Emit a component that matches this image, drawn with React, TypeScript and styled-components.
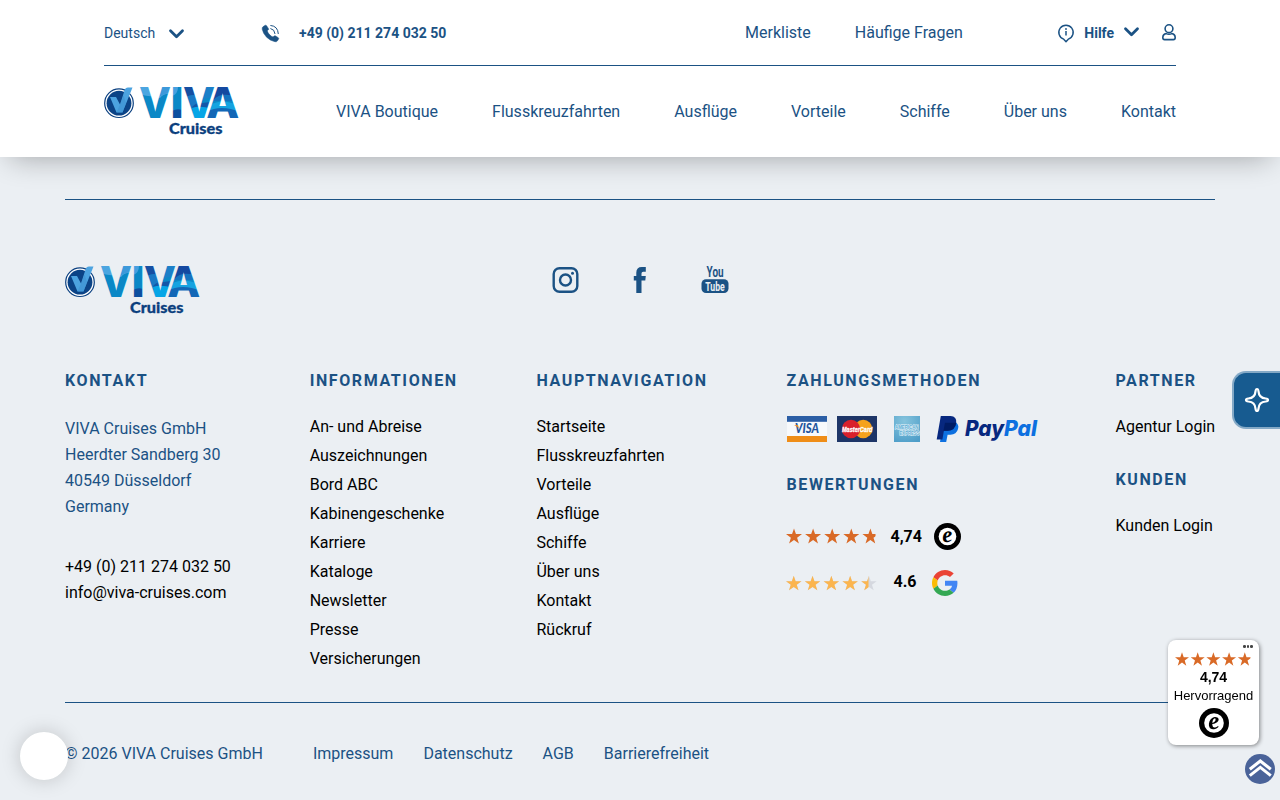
import React, { useId } from 'react';
import styled, { createGlobalStyle } from 'styled-components';

const BLUE = '#1b5284';

const GlobalStyle = createGlobalStyle`
  * { box-sizing: border-box; }
  html, body { margin: 0; height: 800px; overflow: hidden; }
  body {
    background: #ebeff3;
    color: #000;
    font: 400 16px/26px Roboto, "Liberation Sans", sans-serif;
  }
  svg { display: block; flex: none; overflow: visible; }
  a { color: inherit; text-decoration: none; white-space: nowrap; }
`;

const Header = styled.header`
  position: relative;
  height: 157px;
  padding: 0 104px;
  background: #fff;
  color: ${BLUE};
  box-shadow: 0 10px 28px -10px rgba(0, 0, 0, 0.33);
`;
const TopBar = styled.div`
  display: flex;
  align-items: center;
  height: 66px;
  border-bottom: 1px solid ${BLUE};
`;
const Language = styled.div`
  display: flex;
  align-items: center;
  gap: 13.5px;
  width: 157px;
  font-size: 14px;
  padding-top: 1px;
  svg { margin-top: 2px; }
`;
const Phone = styled.a`
  display: flex;
  align-items: center;
  gap: 18px;
  font-size: 14px;
  font-weight: 700;
  padding-top: 1px;
`;
const TopLinks = styled.nav`
  display: flex;
  gap: 44px;
  margin-left: auto;
`;
const Help = styled.div`
  display: flex;
  align-items: center;
  gap: 10px;
  margin: 0 23.5px 0 95.5px;
  font-size: 14px;
  font-weight: 700;
  padding-top: 1px;
  svg:last-child { margin: -2px 0 0 -.5px; }
`;
const MainBar = styled.div`
  display: flex;
  justify-content: space-between;
  align-items: center;
  height: 91px;
`;
const MainNav = styled.nav`
  display: flex;
  gap: 54px;
`;

const Footer = styled.footer`
  padding: 42px 65px 0;
`;
const Rule = styled.hr`
  height: 1px;
  margin: 0;
  border: 0;
  background: ${BLUE};
`;
const BrandRow = styled.div`
  display: grid;
  grid-template-columns: 1fr auto 1fr;
  padding: 66px 0 0;
  height: 170px;
`;
const Social = styled.div`
  display: flex;
  justify-content: space-between;
  width: 177px;
  height: 28px;
  color: ${BLUE};
`;
const Columns = styled.div`
  display: grid;
  grid-template-columns: 244.7px 226.8px 250px 329px auto;
  height: 332px;
`;
const Heading = styled.h4<{ $gap?: number }>`
  margin: 0 0 ${p => p.$gap ?? 20}px;
  color: ${BLUE};
  font-size: 16px;
  font-weight: 700;
  line-height: 22px;
  letter-spacing: 1.6px;
  white-space: nowrap;
`;
const List = styled.ul`
  margin: 0;
  padding: 0;
  list-style: none;
  line-height: 29px;
`;
const Address = styled.p`
  margin: 0 0 34px;
  color: ${BLUE};
`;
const Block = styled.div<{ $height?: number }>`
  height: ${p => (p.$height ? p.$height + 'px' : 'auto')};
`;
const Payments = styled.div`
  display: flex;
  align-items: center;
  height: 28px;
`;
const RatingRow = styled.div<{ $top: number; $gap: number; $logoGap: number; $drop?: number }>`
  display: flex;
  align-items: center;
  height: 28px;
  margin-top: ${p => p.$top}px;
  font-weight: 700;
  span { margin: ${p => p.$drop ?? 0}px ${p => p.$logoGap}px 0 ${p => p.$gap}px; }
`;
const Legal = styled.div`
  display: flex;
  gap: 30px;
  padding-top: 38px;
  color: ${BLUE};
  span { margin-right: 20px; }
`;

const Bubble = styled.div`
  position: fixed;
  left: 20px;
  top: 732px;
  width: 48px;
  height: 48px;
  border-radius: 50%;
  background: #fff;
  box-shadow: 0 0 20px rgba(0, 0, 0, 0.18);
`;
const Assistant = styled.button`
  position: fixed;
  right: 0;
  top: 371px;
  display: grid;
  place-items: center;
  width: 48px;
  height: 58px;
  padding: 0;
  border: 2px solid #84a9c6;
  border-right: 0;
  border-radius: 14px 0 0 14px;
  background: #175b90;
`;
const TrustBadge = styled.aside`
  position: fixed;
  left: 1168px;
  top: 640px;
  display: flex;
  flex-direction: column;
  align-items: center;
  width: 91px;
  height: 105px;
  border-radius: 8px;
  background: #fff;
  box-shadow: 1px 1px 4px rgba(0, 0, 0, 0.45);
  font: 13px/18px "Liberation Sans", Arial, sans-serif;
  padding-top: 11.5px;
  strong { font-size: 14px; line-height: 16px; margin-top: 3.5px; }
  span { line-height: 15px; margin: 3px 0 5px; }
`;
const Dots = styled.i`
  position: absolute;
  right: 6px;
  top: 5px;
  display: flex;
  gap: 1px;
  &::before, &::after, b { content: ''; width: 2.7px; height: 2.7px; border-radius: 50%; background: #444; }
`;
const ToTop = styled.button`
  position: fixed;
  left: 1245px;
  top: 754px;
  width: 30px;
  height: 30px;
  padding: 0;
  border: 0;
  border-radius: 50%;
  background: #4a6399;
`;

function Logo() {
  const id = useId().replace(/[^a-zA-Z0-9]/g, '');
  const stretch = 'spacingAndGlyphs';
  return (
    <svg width="135" height="49" viewBox="0 0 135 49" role="img" aria-label="VIVA Cruises">
      <defs>
        <pattern id={id} width="140" height="60" patternUnits="userSpaceOnUse">
          <rect width="140" height="60" fill="#0b88c6" />
          <path d="M34 0H67V7Q60 6 56 11L50 9Q43 10 34 6Z" fill="#4ba5e0" />
          <path d="M55 10Q61 5 67 7V0H58Z" fill="#3c99da" />
          <path d="M68 0H74Q74 7 68 9Z" fill="#46a0df" />
          <path d="M68 24Q73 21 78 23V32H68Z" fill="#0d4f9f" />
          <path d="M79 0H90Q94 5 93 9Q88 7 82 10Z" fill="#164fa2" />
          <path d="M82 10Q92 5 99 14L92 20H84Z" fill="#1a78c4" />
          <path d="M88 20Q94 14 98 16L106 15L103 23H89Z" fill="#1458a8" />
          <path d="M88 21Q96 18 108 22L104 32H90Z" fill="#06a5e6" />
          <path d="M101 0H112L108 11Q103 9 98 14Z" fill="#1c7fc8" />
          <path d="M112 0H128L130 9Q119 6 108 14Z" fill="#1449a0" />
          <path d="M109 13Q117 5 128 9L130 14H109Z" fill="#1573bf" />
          <path d="M106 18Q118 11 133 18V24H104Z" fill="#15a3e0" />
          <path d="M102 25Q117 17 136 25V32H100Z" fill="#1267b6" />
        </pattern>
      </defs>
      <circle cx="15" cy="16.2" r="14.3" fill="#fff" stroke="#0b4080" strokeWidth="1.2" />
      <circle cx="15" cy="16.2" r="12.4" fill="#0b4386" />
      <path d="M6 10H12L16 17.5L20.5 3.5Q21.3 .6 24 .6H28.5L18.5 25.5H12.5Z" fill="#4ca3e0" />
      <path d="M16 17.5L19.5 8.5L22 16L18.5 25.5H12.5Z" fill="#398dcd" opacity=".5" />
      <g fontFamily="Inter" fontWeight="800" fontSize="41.8" fill={`url(#${id})`}>
        <text x="34.9" y="30.9" textLength="32" lengthAdjust={stretch}>V</text>
        <text x="66.2" y="30.9" textLength="13.6" lengthAdjust={stretch}>I</text>
        <text x="79" y="30.9" textLength="32" lengthAdjust={stretch}>V</text>
        <text x="102.2" y="30.9" textLength="33" lengthAdjust={stretch}>A</text>
      </g>
      <text x="65" y="47.4" textLength="53.5" lengthAdjust={stretch} fontFamily="Lato" fontWeight="900" fontSize="15" fill="#0b3f7e" stroke="#0b3f7e" strokeWidth=".3">Cruises</text>
    </svg>
  );
}

const Chevron = () => (
  <svg width="15" height="10" viewBox="0 0 15 10" fill="none" stroke={BLUE} strokeWidth="2.8">
    <path d="M1.5 1.8L7.5 7.8L13.5 1.8" strokeLinecap="round" strokeLinejoin="round" />
  </svg>
);

const PhoneIcon = () => (
  <svg width="20" height="19" viewBox="0 0 20 19" fill="none">
    <path d="M2.2 2.6L4.2 1.3Q5 .9 5.6 1.7L7.5 4.7Q7.9 5.4 7.2 6L6.2 6.8Q6.9 9.2 9 11.1Q10.5 12.6 12 12.9L13.2 12Q13.8 11.4 14.6 11.9L17.3 13.7Q18 14.3 17.6 15L16.3 17Q15.6 18 14 17.7Q9.5 17 5.6 13.2Q2 9.5 1.2 5.2Q.9 3.5 2.2 2.6Z" fill={BLUE} stroke={BLUE} strokeWidth=".5" />
    <path d="M9.8 4.6Q13.6 5.3 14 9.6M9.8 1.5Q16.8 2 17.3 9.6" stroke={BLUE} strokeWidth="1" strokeLinecap="round" />
  </svg>
);

const InfoIcon = () => (
  <svg width="16" height="19" viewBox="0 0 16 19" fill="none" stroke={BLUE} strokeWidth="1.4">
    <path d="M5.7 15.2A7.2 7.2 0 1 1 10.3 15.2L8 17.8Z" strokeLinejoin="round" />
    <path d="M8 7V11.6" strokeWidth="1.5" />
    <circle cx="8" cy="5" r=".9" fill={BLUE} stroke="none" />
  </svg>
);

const UserIcon = () => (
  <svg width="14" height="17" viewBox="0 0 14 17" fill="none" stroke={BLUE} strokeWidth="1.6">
    <circle cx="7" cy="4.7" r="3.9" />
    <path d="M4.2 9.6Q.9 10 .8 13.5Q.8 15.6 2.6 15.6H11.4Q13.2 15.6 13.2 13.5Q13.1 10 9.8 9.6Q7 11 4.2 9.6Z" strokeLinejoin="round" />
  </svg>
);

const Instagram = () => (
  <svg width="27" height="28" viewBox="0 0 27 28" fill="none" stroke="currentColor">
    <rect x="1.7" y="2.2" width="23.6" height="23.6" rx="5.8" strokeWidth="2.4" />
    <circle cx="13.5" cy="14" r="5.5" strokeWidth="2.4" />
    <circle cx="20.5" cy="7.2" r="1.5" fill="currentColor" stroke="none" />
  </svg>
);

const Facebook = () => (
  <svg width="14" height="28" viewBox="0 0 14 28" fill="currentColor">
    <path d="M3.3 27V14.6H.8V10H3.3V6.6Q3.3 1 8.8 1H12.8V5.7H10.2Q8.5 5.7 8.5 7.4V10H12.8L12.3 14.6H8.5V27Z" />
  </svg>
);

const Youtube = () => (
  <svg width="28" height="28" viewBox="0 0 28 28" fontFamily="Roboto" fontWeight="700">
    <text x="5.6" y="11.4" fontSize="14.5" textLength="17" lengthAdjust="spacingAndGlyphs" fill="currentColor">You</text>
    <rect x=".5" y="13.2" width="27" height="13.8" rx="4.5" fill="currentColor" />
    <text x="4.3" y="24.8" fontSize="13" textLength="19.5" lengthAdjust="spacingAndGlyphs" fill="#ebeff3">Tube</text>
  </svg>
);

const Google = () => (
  <svg width="26" height="26" viewBox="0 0 48 48">
    <path fill="#ea4335" d="M24 9.5c3.54 0 6.71 1.22 9.21 3.6l6.85-6.85C35.9 2.38 30.47 0 24 0 14.62 0 6.51 5.38 2.56 13.22l7.98 6.19C12.43 13.72 17.74 9.5 24 9.5z" />
    <path fill="#4285f4" d="M46.98 24.55c0-1.57-.15-3.09-.38-4.55H24v9.02h12.94c-.58 2.96-2.26 5.48-4.78 7.18l7.73 6c4.51-4.18 7.09-10.36 7.09-17.65z" />
    <path fill="#fbbc05" d="M10.53 28.59c-.48-1.45-.76-2.99-.76-4.59s.27-3.14.76-4.59l-7.98-6.19C.92 16.46 0 20.12 0 24c0 3.88.92 7.54 2.56 10.78l7.97-6.19z" />
    <path fill="#34a853" d="M24 48c6.48 0 11.93-2.13 15.89-5.81l-7.73-6c-2.15 1.45-4.92 2.3-8.16 2.3-6.26 0-11.57-4.22-13.47-9.91l-7.98 6.19C6.51 42.62 14.62 48 24 48z" />
  </svg>
);

const STAR = 'M8 0L9.95 5.7H16L11.1 9.35L12.9 15.2L8 11.65L3.1 15.2L4.9 9.35L0 5.7H6.05Z';

type StarsProps = { width: number; height: number; size: number; step: number; color: string; fill: number; rest?: string };
function Stars({ width, height, size, step, color, fill, rest = 'none' }: StarsProps) {
  const id = useId().replace(/[^a-zA-Z0-9]/g, '');
  const s = size / 16;
  return (
    <svg width={width} height={height} viewBox={`0 0 ${width} ${height}`}>
      <clipPath id={id}><rect width={fill} height={height} /></clipPath>
      {[rest, color].map((c, layer) => (
        <g key={layer} fill={c} clipPath={layer ? `url(#${id})` : undefined}>
          {[0, 1, 2, 3, 4].map(i => (
            <path key={i} d={STAR} transform={`translate(${i * step} ${(height - 15.2 * s) / 2}) scale(${s})`} />
          ))}
        </g>
      ))}
    </svg>
  );
}

const TrustedMark = ({ size }: { size: number }) => (
  <svg width={size} height={size} viewBox="0 0 30 30">
    <circle cx="15" cy="15" r="15" fill="#000" />
    <circle cx="15" cy="15" r="9.8" fill="#fff" />
    <text x="9" y="21" textLength="11.5" lengthAdjust="spacingAndGlyphs" fontFamily="Liberation Serif" fontStyle="italic" fontWeight="700" fontSize="25" transform="rotate(-6 15 15)">e</text>
  </svg>
);

const Visa = () => (
  <svg width="41" height="26" viewBox="0 0 41 26">
    <rect x="1" width="40" height="26" fill="#f7f9fb" />
    <rect x="1" width="40" height="5.8" fill="#2b5ea5" />
    <rect x="1" y="20" width="40" height="6" fill="#ef8d17" />
    <text x="9" y="17.3" fontFamily="Lato" fontStyle="italic" fontWeight="900" fontSize="12.5" textLength="24" lengthAdjust="spacingAndGlyphs" fill="#23559d">VISA</text>
    <path d="M8 9H11.2Q12.2 9 12.3 10L12.8 12.4Q11 9.8 8 9Z" fill="#ef8d17" />
  </svg>
);

const Mastercard = () => (
  <svg width="40" height="26" viewBox="0 0 40 26">
    <rect width="40" height="26" fill="#1d3567" />
    <circle cx="26.2" cy="13" r="9.2" fill="#f5a21d" />
    <circle cx="14" cy="13" r="9.2" fill="#d9202c" />
    <text x="5" y="16" fontFamily="Liberation Sans" fontStyle="italic" fontWeight="700" fontSize="7.5" textLength="30.5" lengthAdjust="spacingAndGlyphs" fill="#fff" stroke="#fff" strokeWidth=".3">MasterCard</text>
  </svg>
);

function Amex() {
  const id = useId().replace(/[^a-zA-Z0-9]/g, '');
  return (
    <svg width="26" height="26" viewBox="0 0 26 26" fontFamily="Liberation Sans" fontWeight="700" fontSize="5.8">
      <radialGradient id={id} cx=".4" cy=".2" r=".9">
        <stop offset="0" stopColor="#86c4dd" />
        <stop offset="1" stopColor="#4d9dc8" />
      </radialGradient>
      <rect width="26" height="26" fill={`url(#${id})`} />
      <g fill="#5aabd2" stroke="#e9f5fb" strokeWidth="1.1" paintOrder="stroke">
        <text x="1" y="12.9" textLength="23.5" lengthAdjust="spacingAndGlyphs">AMERICAN</text>
        <text x="5.5" y="18.8" textLength="20" lengthAdjust="spacingAndGlyphs">EXPRESS</text>
      </g>
    </svg>
  );
}

const Paypal = () => (
  <svg width="101" height="28" viewBox="0 0 101 28" fontFamily="Inter" fontStyle="italic" fontWeight="800" fontSize="21.5">
    <path d="M7.2 7H19Q23.5 9.3 22 14Q20.5 19.7 14.5 19.7H11.6L10.2 27H4Z" fill="#0d70e0" />
    <path d="M4.8 1H14.5Q21 1.4 20.2 8Q19 15.8 11.5 15.8H7.9L6.4 24.5H.7Z" fill="#07287f" />
    <path d="M9 7.7H20.2Q19 15.8 11.5 15.8H7.5Z" fill="#001c64" />
    <text x="29" y="21" textLength="39" lengthAdjust="spacingAndGlyphs" fill="#07287f">Pay</text>
    <text x="68" y="21" textLength="33" lengthAdjust="spacingAndGlyphs" fill="#0d70e0">Pal</text>
  </svg>
);

const Links = ({ items }: { items: string[] }) => (
  <List>{items.map(t => <li key={t}><a href="#">{t}</a></li>)}</List>
);

const Spacer = styled.div<{ $w: number }>`
  width: ${p => p.$w}px;
`;

export default function App() {
  return (
    <>
      <GlobalStyle />
      <Header>
        <TopBar>
          <Language>Deutsch <Chevron /></Language>
          <Phone href="#"><PhoneIcon />+49 (0) 211 274 032 50</Phone>
          <TopLinks><a href="#">Merkliste</a><a href="#">Häufige Fragen</a></TopLinks>
          <Help><InfoIcon />Hilfe <Chevron /></Help>
          <UserIcon />
        </TopBar>
        <MainBar>
          <Logo />
          <MainNav>
            {['VIVA Boutique', 'Flusskreuzfahrten', 'Ausflüge', 'Vorteile', 'Schiffe', 'Über uns', 'Kontakt'].map(t => <a href="#" key={t}>{t}</a>)}
          </MainNav>
        </MainBar>
      </Header>

      <Footer>
        <Rule />
        <BrandRow>
          <Logo />
          <Social><Instagram /><Facebook /><Youtube /></Social>
        </BrandRow>
        <Columns>
          <Block>
            <Heading $gap={24}>KONTAKT</Heading>
            <Address>VIVA Cruises GmbH<br />Heerdter Sandberg 30<br />40549 Düsseldorf<br />Germany</Address>
            <a href="#">+49 (0) 211 274 032 50</a><br />
            <a href="#">info@viva-cruises.com</a>
          </Block>
          <Block>
            <Heading>INFORMATIONEN</Heading>
            <Links items={['An- und Abreise', 'Auszeichnungen', 'Bord ABC', 'Kabinengeschenke', 'Karriere', 'Kataloge', 'Newsletter', 'Presse', 'Versicherungen']} />
          </Block>
          <Block>
            <Heading>HAUPTNAVIGATION</Heading>
            <Links items={['Startseite', 'Flusskreuzfahrten', 'Vorteile', 'Ausflüge', 'Schiffe', 'Über uns', 'Kontakt', 'Rückruf']} />
          </Block>
          <Block>
            <Block $height={104}>
              <Heading $gap={23}>ZAHLUNGSMETHODEN</Heading>
              <Payments>
                <Visa /><Spacer $w={10} /><Mastercard /><Spacer $w={17} /><Amex /><Spacer $w={16} /><Paypal />
              </Payments>
            </Block>
            <Heading $gap={0}>BEWERTUNGEN</Heading>
            <RatingRow $top={26} $gap={14} $logoGap={12} $drop={2}>
              <Stars width={90} height={20} size={16} step={19.1} color="#d96a27" fill={89.5} />
              <span>4,74</span>
              <TrustedMark size={27} />
            </RatingRow>
            <RatingRow $top={19} $gap={17} $logoGap={16} $drop={-2}>
              <Stars width={90} height={20} size={15.5} step={18.8} color="#fbb54f" fill={82.5} rest="#d5d8df" />
              <span>4.6</span>
              <Google />
            </RatingRow>
          </Block>
          <Block>
            <Block $height={99}>
              <Heading>PARTNER</Heading>
              <Links items={['Agentur Login']} />
            </Block>
            <Heading>KUNDEN</Heading>
            <Links items={['Kunden Login']} />
          </Block>
        </Columns>
        <Rule />
        <Legal>
          <span>© 2026 VIVA Cruises GmbH</span>
          {['Impressum', 'Datenschutz', 'AGB', 'Barrierefreiheit'].map(t => <a href="#" key={t}>{t}</a>)}
        </Legal>
      </Footer>

      <Bubble />
      <Assistant aria-label="Assistant">
        <svg width="26" height="26" viewBox="0 0 26 26" fill="none" stroke="#fff" strokeWidth="2.2" strokeLinejoin="round">
          <path d="M13 2Q14.2 2 14.5 4.4Q15 11 21.6 11.5Q24 11.8 24 13T21.6 14.5Q15 15 14.5 21.6Q14.2 24 13 24T11.5 21.6Q11 15 4.4 14.5Q2 14.2 2 13T4.4 11.5Q11 11 11.5 4.4Q11.8 2 13 2Z" />
        </svg>
      </Assistant>
      <TrustBadge>
        <Dots><b /></Dots>
        <Stars width={77} height={14} size={14} step={15.7} color="#d96a27" fill={75.5} />
        <strong>4,74</strong>
        <span>Hervorragend</span>
        <TrustedMark size={30} />
      </TrustBadge>
      <ToTop aria-label="Nach oben">
        <svg width="30" height="30" viewBox="0 0 30 30" fill="none" stroke="#fff" strokeWidth="3">
          <path d="M4.8 15.3L15.3 7L25.8 15.3M4.8 21.6L15.3 13.3L25.8 21.6" />
        </svg>
      </ToTop>
    </>
  );
}
